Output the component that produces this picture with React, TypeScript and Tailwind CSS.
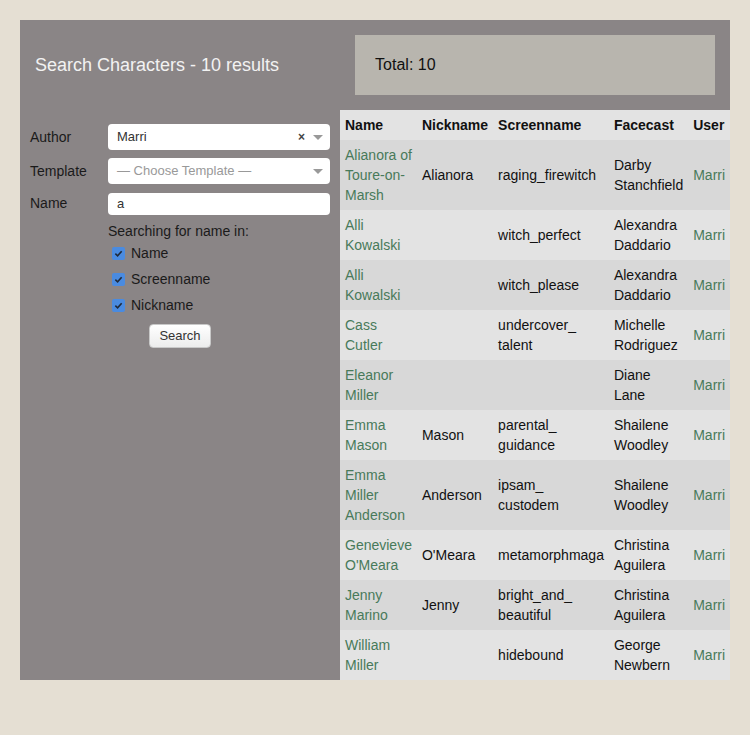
import React from "react";

type Row = {
  name: string[];
  nickname: string;
  screen: string[];
  face: string[];
};

const rows: Row[] = [
  { name: ["Alianora of", "Toure-on-", "Marsh"], nickname: "Alianora", screen: ["raging_firewitch"], face: ["Darby", "Stanchfield"] },
  { name: ["Alli", "Kowalski"], nickname: "", screen: ["witch_perfect"], face: ["Alexandra", "Daddario"] },
  { name: ["Alli", "Kowalski"], nickname: "", screen: ["witch_please"], face: ["Alexandra", "Daddario"] },
  { name: ["Cass", "Cutler"], nickname: "", screen: ["undercover_", "talent"], face: ["Michelle", "Rodriguez"] },
  { name: ["Eleanor", "Miller"], nickname: "", screen: [], face: ["Diane", "Lane"] },
  { name: ["Emma", "Mason"], nickname: "Mason", screen: ["parental_", "guidance"], face: ["Shailene", "Woodley"] },
  { name: ["Emma", "Miller", "Anderson"], nickname: "Anderson", screen: ["ipsam_", "custodem"], face: ["Shailene", "Woodley"] },
  { name: ["Genevieve", "O'Meara"], nickname: "O'Meara", screen: ["metamorphmaga"], face: ["Christina", "Aguilera"] },
  { name: ["Jenny", "Marino"], nickname: "Jenny", screen: ["bright_and_", "beautiful"], face: ["Christina", "Aguilera"] },
  { name: ["William", "Miller"], nickname: "", screen: ["hidebound"], face: ["George", "Newbern"] },
];

function Lines({ items }: { items: string[] }) {
  return (
    <>
      {items.map((t, i) => (
        <div key={i}>{t}</div>
      ))}
    </>
  );
}

function Caret() {
  return <span className="ml-[8px] w-0 h-0 border-x-[5px] border-x-transparent border-t-[5px] border-t-[#999]" />;
}

function Check({ label }: { label: string }) {
  return (
    <label className="flex items-center h-[26px] pl-1 gap-[6px] text-[14px] text-[#1a1a1a]">
      <span className="w-[13px] h-[13px] rounded-[2px] bg-[#4a8be0] flex items-center justify-center">
        <svg width="9" height="9" viewBox="0 0 10 10">
          <path d="M1.5 5.2 L4 7.5 L8.5 2.5" fill="none" stroke="#1f2a3a" strokeWidth="1.8" />
        </svg>
      </span>
      {label}
    </label>
  );
}

export default function App() {
  return (
    <div className="min-h-[735px] bg-[#e5dfd3] p-5 font-['Liberation_Sans',Arial,sans-serif]">
      <div className="w-[710px] bg-[#8a8586]">

        {/* HEADER */}

        <div className="h-[90px] flex items-center pl-[15px] pr-[15px] gap-[76px]">
          <h1 className="text-[18px] text-[#f2f2f2] whitespace-nowrap">
            Search Characters - 10 results
          </h1>
          <div className="flex-1 h-[60px] bg-[#b8b5ae] flex items-center px-5 text-[16px] text-[#111]">
            Total: 10
          </div>
        </div>

        <div className="flex">

          {/* SEARCH FORM */}

          <div className="w-[320px] pt-[14px] pl-[10px] pr-[10px]">
            <div className="grid grid-cols-[78px_222px] gap-y-2 items-center text-[14px] text-[#1a1a1a]">
              <span>Author</span>
              <div className="h-[26px] bg-white rounded-[4px] flex items-center pl-[9px] pr-[7px] text-[13px] text-[#333]">
                <span className="flex-1">Marri</span>
                <span className="text-[12px] font-bold text-[#444] leading-none">×</span>
                <Caret />
              </div>

              <span>Template</span>
              <div className="h-[26px] bg-white rounded-[4px] flex items-center pl-[9px] pr-[7px] text-[13px] text-[#999]">
                <span className="flex-1">— Choose Template —</span>
                <Caret />
              </div>

              <span>Name</span>
              <div className="h-[22px] mt-[1px] bg-white rounded-[4px] flex items-center px-[9px] text-[13px] text-[#333]">
                a
              </div>
            </div>

            <div className="ml-[78px] mt-[6px] text-[14px] text-[#1a1a1a]">
              Searching for name in:
            </div>
            <div className="ml-[78px] -mt-[2px]">
              <Check label="Name" />
              <Check label="Screenname" />
              <Check label="Nickname" />
            </div>

            <div className="flex justify-center mt-[6px]">
              <button className="h-[24px] px-[9px] bg-gradient-to-b from-white to-[#ececec] border border-[#c8c8c8] rounded-[4px] text-[13px] text-[#333]">
                Search
              </button>
            </div>
          </div>

          {/* RESULTS */}

          <table className="w-[390px] border-collapse text-[14px] leading-5 text-[#111]">
            <thead>
              <tr className="bg-[#e3e3e3] h-[30px] font-bold text-left">
                <th className="w-[77px] px-[5px]">Name</th>
                <th className="w-[76px] px-[5px]">Nickname</th>
                <th className="w-[116px] px-[5px]">Screenname</th>
                <th className="w-[79px] px-[5px]">Facecast</th>
                <th className="px-[5px]">User</th>
              </tr>
            </thead>
            <tbody>
              {rows.map((r, i) => (
                <tr key={i} className={i % 2 === 0 ? "bg-[#d8d8d8]" : "bg-[#e3e3e3]"}>
                  <td className="px-[5px] py-[5px] align-middle text-[#487a5a]">
                    <Lines items={r.name} />
                  </td>
                  <td className="px-[5px] py-[5px] align-middle">{r.nickname}</td>
                  <td className="px-[5px] py-[5px] align-middle">
                    <Lines items={r.screen} />
                  </td>
                  <td className="px-[5px] py-[5px] align-middle">
                    <Lines items={r.face} />
                  </td>
                  <td className="px-[5px] py-[5px] align-middle text-[#487a5a]">Marri</td>
                </tr>
              ))}
            </tbody>
          </table>

        </div>
      </div>
    </div>
  );
}
